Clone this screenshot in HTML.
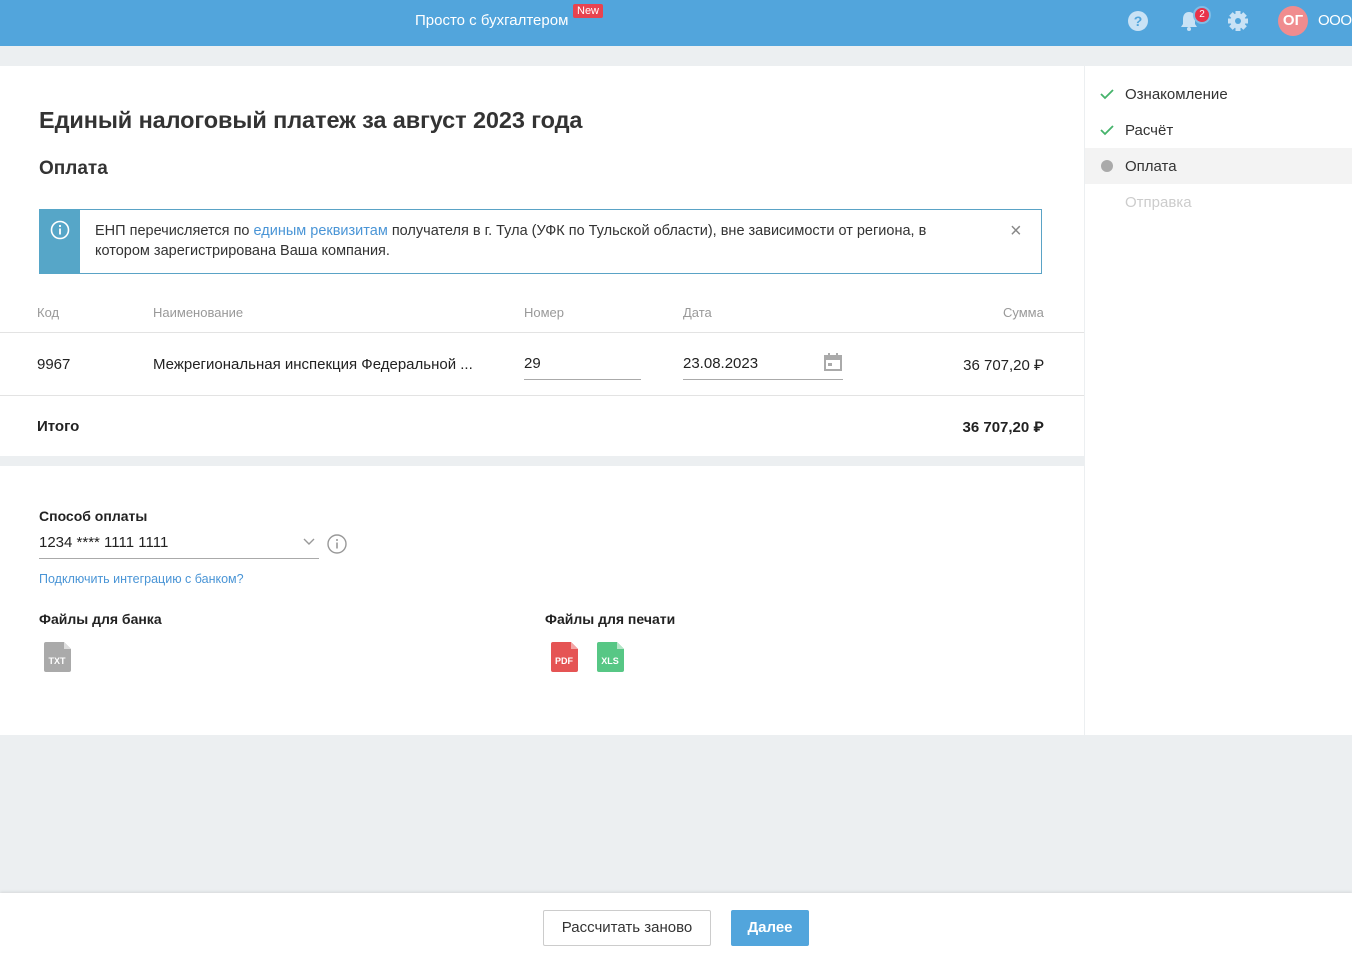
<!DOCTYPE html>
<html><head><meta charset="utf-8"><style>
*{box-sizing:border-box;margin:0;padding:0}
body{width:1352px;height:953px;position:relative;background:#eceff1;font-family:"Liberation Sans",Roboto,sans-serif;color:#222;overflow:hidden}
.a{position:absolute}
.hdr{left:0;top:0;width:1352px;height:46px;background:#52a5dc}
.main{left:0;top:66px;width:1084px;height:669px;background:#fff}
.side{left:1085px;top:66px;width:267px;height:669px;background:#fff}
.foot{left:0;top:893px;width:1352px;height:60px;background:#fff;box-shadow:0 -1px 3px rgba(0,0,0,.1)}
.lbl{font-size:13px;color:#999}
.t15{font-size:15px}
</style></head><body>
<div class="a hdr"></div>
<div class="a" style="left:415px;top:12px;color:#fff;font-size:15px">Просто с бухгалтером</div>
<div class="a" style="left:573px;top:4px;background:#e8434f;color:#fff;font-size:11px;padding:1px 4px;border-radius:2px">New</div>
<svg class="a" style="left:1127px;top:10px" width="22" height="22"><circle cx="11" cy="11" r="10" fill="#c9e2f5"/><text x="11" y="16" text-anchor="middle" font-size="14" font-weight="bold" fill="#52a5dc" font-family="Liberation Sans">?</text></svg>
<svg class="a" style="left:1178px;top:9px" width="22" height="24"><path d="M11 3c-4 0-6 3-6 7v5l-2 3h16l-2-3v-5c0-4-2-7-6-7z" fill="#c9e2f5"/><circle cx="11" cy="20" r="2" fill="#c9e2f5"/></svg>
<div class="a" style="left:1193px;top:6px;width:18px;height:18px;border-radius:50%;background:#e8334a;border:2px solid #7fbde6;color:#fff;font-size:10px;text-align:center;line-height:14px">2</div>
<svg class="a" style="left:1227px;top:10px" width="22" height="22"><g fill="#c9e2f5"><circle cx="11" cy="11" r="7.5"/><g transform="translate(11 11)"><rect x="-2.5" y="-10" width="5" height="20"/><rect x="-2.5" y="-10" width="5" height="20" transform="rotate(45)"/><rect x="-2.5" y="-10" width="5" height="20" transform="rotate(90)"/><rect x="-2.5" y="-10" width="5" height="20" transform="rotate(135)"/></g></g><circle cx="11" cy="11" r="3" fill="#52a5dc"/></svg>
<div class="a" style="left:1278px;top:6px;width:30px;height:30px;border-radius:50%;background:#f08c8f;color:#fff;font-weight:bold;font-size:15px;text-align:center;line-height:30px">ОГ</div>
<div class="a" style="left:1318px;top:12px;color:#fff;font-size:15px;letter-spacing:-0.5px">ООО</div>

<div class="a main"></div>
<div class="a side"></div>
<div class="a" style="left:0;top:456px;width:1084px;height:10px;background:#eceff1"></div>

<div class="a" style="left:39px;top:107px;font-size:23.5px;font-weight:bold;color:#333;letter-spacing:-0.1px">Единый налоговый платеж за август 2023 года</div>
<div class="a" style="left:39px;top:158px;font-size:19px;font-weight:bold;color:#333">Оплата</div>

<div class="a" style="left:39px;top:209px;width:1003px;height:65px;border:1px solid #5aa3c6"></div>
<div class="a" style="left:39px;top:209px;width:41px;height:65px;background:#56a6c8"></div>
<svg class="a" style="left:50px;top:220px" width="20" height="20"><circle cx="10" cy="10" r="8.5" fill="none" stroke="#fff" stroke-width="1.6"/><rect x="9.1" y="8.5" width="1.8" height="6" fill="#fff"/><circle cx="10" cy="6" r="1.1" fill="#fff"/></svg>
<div class="a" style="left:95px;top:221px;width:920px;font-size:14.5px;line-height:20px;color:#333;white-space:nowrap">ЕНП перечисляется по <span style="color:#4a95d6">единым реквизитам</span> получателя в г. Тула (УФК по Тульской области), вне зависимости от региона, в<br>котором зарегистрирована Ваша компания.</div>
<div class="a" style="left:1010px;top:220px;font-size:20px;color:#888">×</div>

<div class="a lbl" style="left:37px;top:305px">Код</div>
<div class="a lbl" style="left:153px;top:305px">Наименование</div>
<div class="a lbl" style="left:524px;top:305px">Номер</div>
<div class="a lbl" style="left:683px;top:305px">Дата</div>
<div class="a lbl" style="left:1003px;top:305px">Сумма</div>
<div class="a" style="left:0;top:332px;width:1084px;height:1px;background:#e3e3e3"></div>
<div class="a t15" style="left:37px;top:356px">9967</div>
<div class="a t15" style="left:153px;top:356px">Межрегиональная инспекция Федеральной ...</div>
<div class="a t15" style="left:524px;top:355px">29</div>
<div class="a" style="left:524px;top:379px;width:117px;height:1px;background:#aaa"></div>
<div class="a t15" style="left:683px;top:355px">23.08.2023</div>
<div class="a" style="left:683px;top:379px;width:160px;height:1px;background:#aaa"></div>
<svg class="a" style="left:823px;top:352px" width="20" height="20"><rect x="2" y="4" width="16" height="14" fill="none" stroke="#aaa" stroke-width="2"/><rect x="2" y="4" width="16" height="4" fill="#aaa"/><rect x="5" y="1" width="2" height="4" fill="#aaa"/><rect x="13" y="1" width="2" height="4" fill="#aaa"/><rect x="5" y="11" width="4" height="3" fill="#aaa"/></svg>
<div class="a t15" style="left:900px;width:144px;text-align:right;top:356px">36 707,20 ₽</div>
<div class="a" style="left:0;top:395px;width:1084px;height:1px;background:#e3e3e3"></div>
<div class="a t15" style="left:37px;top:418px;font-weight:bold">Итого</div>
<div class="a t15" style="left:900px;width:144px;text-align:right;top:418px;font-weight:bold">36 707,20 ₽</div>

<div class="a" style="left:39px;top:508px;font-size:14px;font-weight:bold">Способ оплаты</div>
<div class="a t15" style="left:39px;top:534px">1234 **** 1111 1111</div>
<svg class="a" style="left:303px;top:538px" width="12" height="8"><path d="M1 1l5 5 5-5" fill="none" stroke="#999" stroke-width="1.4"/></svg>
<div class="a" style="left:39px;top:558px;width:280px;height:1px;background:#aaa"></div>
<svg class="a" style="left:327px;top:534px" width="20" height="20"><circle cx="10" cy="10" r="9" fill="none" stroke="#999" stroke-width="1.4"/><rect x="9.2" y="8.5" width="1.6" height="6" fill="#999"/><circle cx="10" cy="6" r="1" fill="#999"/></svg>
<div class="a" style="left:39px;top:572px;font-size:12.5px;color:#4a95d6">Подключить интеграцию с банком?</div>

<div class="a" style="left:39px;top:611px;font-size:14px;font-weight:bold">Файлы для банка</div>
<div class="a" style="left:545px;top:611px;font-size:14px;font-weight:bold">Файлы для печати</div>
<svg class="a" style="left:44px;top:642px" width="27" height="30"><path d="M0 2a2 2 0 0 1 2-2h18l7 7v21a2 2 0 0 1-2 2H2a2 2 0 0 1-2-2z" fill="#aaa"/><path d="M20 0l7 7h-7z" fill="#ddd"/><text x="13" y="22" text-anchor="middle" font-size="9" font-weight="bold" fill="#fff" font-family="Liberation Sans">TXT</text></svg>
<svg class="a" style="left:551px;top:642px" width="27" height="30"><path d="M0 2a2 2 0 0 1 2-2h18l7 7v21a2 2 0 0 1-2 2H2a2 2 0 0 1-2-2z" fill="#e55454"/><path d="M20 0l7 7h-7z" fill="#f3a5a5"/><text x="13" y="22" text-anchor="middle" font-size="9" font-weight="bold" fill="#fff" font-family="Liberation Sans">PDF</text></svg>
<svg class="a" style="left:597px;top:642px" width="27" height="30"><path d="M0 2a2 2 0 0 1 2-2h18l7 7v21a2 2 0 0 1-2 2H2a2 2 0 0 1-2-2z" fill="#57c785"/><path d="M20 0l7 7h-7z" fill="#b5e6c8"/><text x="13" y="22" text-anchor="middle" font-size="9" font-weight="bold" fill="#fff" font-family="Liberation Sans">XLS</text></svg>

<svg class="a" style="left:1100px;top:88px" width="14" height="12"><path d="M1 6l4 4 8-8" fill="none" stroke="#45b36b" stroke-width="1.8"/></svg>
<div class="a t15" style="left:1125px;top:86px;color:#333">Ознакомление</div>
<svg class="a" style="left:1100px;top:124px" width="14" height="12"><path d="M1 6l4 4 8-8" fill="none" stroke="#45b36b" stroke-width="1.8"/></svg>
<div class="a t15" style="left:1125px;top:122px;color:#333">Расчёт</div>
<div class="a" style="left:1085px;top:148px;width:267px;height:36px;background:#f3f3f3"></div>
<div class="a" style="left:1101px;top:160px;width:12px;height:12px;border-radius:50%;background:#aaa"></div>
<div class="a t15" style="left:1125px;top:158px;color:#333">Оплата</div>
<div class="a t15" style="left:1125px;top:194px;color:#ccc">Отправка</div>

<div class="a foot"></div>
<div class="a" style="left:543px;top:910px;width:168px;height:36px;border:1px solid #ccc;border-radius:2px;background:#fff;font-size:15px;text-align:center;line-height:34px;color:#333">Рассчитать заново</div>
<div class="a" style="left:731px;top:910px;width:78px;height:36px;border-radius:2px;background:#52a5dc;font-size:15px;text-align:center;line-height:36px;color:#fff;font-weight:bold">Далее</div>
</body></html>
